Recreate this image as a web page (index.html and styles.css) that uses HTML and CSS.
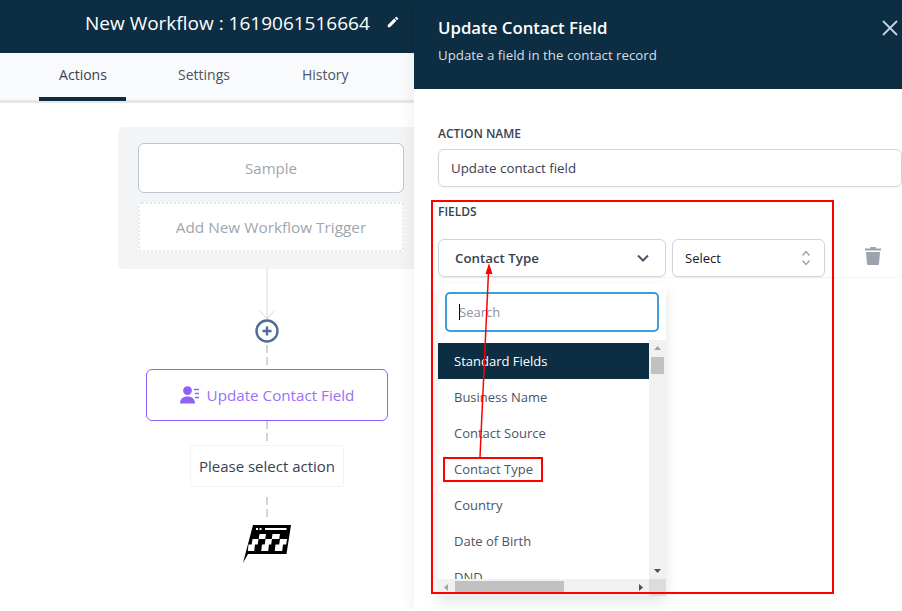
FILE: index.html
```html
<!DOCTYPE html>
<html lang="en">
<head>
<meta charset="utf-8">
<title>Update Contact Field</title>
<link rel="stylesheet" href="styles.css">
</head>
<body>
<div class="app">
  <main class="builder">
    <header class="top">
      <span class="top-title">New Workflow : 1619061516664</span>
      <svg class="pencil" viewBox="0 0 24 24" width="14" height="14"><path fill="#fff" d="M3 17.25V21h3.75L17.81 9.94l-3.75-3.75L3 17.25zM20.71 7.04a1 1 0 0 0 0-1.41l-2.34-2.34a1 1 0 0 0-1.41 0l-1.83 1.83 3.75 3.75 1.83-1.83z"/></svg>
    </header>
    <nav class="tabs">
      <a class="tab tab-active">Actions</a>
      <a class="tab tab-settings">Settings</a>
      <a class="tab tab-history">History</a>
    </nav>
    <section class="canvas">
      <div class="trigger-card">
        <div class="trigger">Sample</div>
        <div class="trigger trigger-add">Add New Workflow Trigger</div>
      </div>
      <div class="flow">
        <svg class="arrow-in" width="20" height="51" viewBox="0 0 20 51"><path d="M10 0V50M3 42l7 8 7-8" fill="none" stroke="#d5d8de" stroke-width="1"/></svg>
        <svg class="plus" width="24" height="24" viewBox="0 0 24 24"><circle cx="12" cy="12" r="10.500" fill="#fff" stroke="#4d6d92" stroke-width="2.400"/><path d="M12 7.500v9M7.500 12h9" stroke="#4d6d92" stroke-width="2.400"/></svg>
        <div class="dash dash-a"></div>
        <div class="action">
          <svg width="20" height="18" viewBox="0 0 20 18"><circle cx="7.500" cy="4.600" r="4.400" fill="#9061f9"/><path d="M0 17.500c0-4.500 3-7 7.500-7s7.500 2.500 7.500 7z" fill="#9061f9"/><path d="M14 3.500h5M15 7.500h4M15 11.500h4" stroke="#9061f9" stroke-width="1.600"/></svg>
          <span>Update Contact Field</span>
        </div>
        <div class="dash dash-b"></div>
        <div class="select-action">Please select action</div>
        <div class="dash dash-c"></div>
        <svg class="finish" width="48" height="38" viewBox="0 0 48 38">
          <path d="M10 0H48L43.500 29H5L0 38Z" fill="#000"/>
          <path d="M13 3h2v2h-2zM16.500 3h2v2h-2zM22 3h21.500v2H22z" fill="#fff"/>
          <path d="M16.500 9h6.500l-.8 5h-6.500zM29.500 9h7.500l-.8 5h-7.500zM9.500 14h6l-.8 5.500h-6zM22.500 14h6.500l-.8 5.500h-6.500zM37 14h7l-.8 5.500h-7zM5.500 19.500h6.500l-.8 6.500H4.800zM19 19.500h7l-.8 6.500h-7zM32.500 19.500h7.500l-.8 6.500h-7.500z" fill="#fff"/>
        </svg>
      </div>
    </section>
  </main>

  <aside class="panel">
    <header class="panel-head">
      <div>
        <h1 class="panel-title">Update Contact Field</h1>
        <p class="panel-sub">Update a field in the contact record</p>
      </div>
      <svg class="close" width="16" height="16" viewBox="0 0 16 16"><path d="M1 1l14 14M15 1L1 15" stroke="#c6d3e6" stroke-width="1.800"/></svg>
    </header>
    <div class="panel-body">
      <label class="label">ACTION NAME</label>
      <div class="input">Update contact field</div>
      <label class="label label-fields">FIELDS</label>
      <div class="field-row">
        <div class="select select-type">
          <span>Contact Type</span>
          <svg width="12" height="8" viewBox="0 0 12 8"><path d="M1 1.500l5 5 5-5" fill="none" stroke="#4b5563" stroke-width="2"/></svg>
        </div>
        <div class="select select-value">
          <span>Select</span>
          <svg width="10" height="16" viewBox="0 0 10 16"><path d="M1.500 5.500L5 1.500l3.500 4M1.500 10.500L5 14.500l3.500-4" fill="none" stroke="#9ca3af" stroke-width="1.400"/></svg>
        </div>
        <svg class="trash" width="16" height="18" viewBox="0 0 16 18"><path fill="#9ca3af" d="M5.500 0h5l.7 1.500H16v2H0v-2h4.800zM1 5h14l-1 12a1 1 0 0 1-1 1H3a1 1 0 0 1-1-1z"/></svg>
      </div>
      <div class="dropdown">
        <div class="search"><span class="caret"></span><span class="search-text">Search</span></div>
        <div class="list-wrap">
          <ul class="list">
            <li class="list-group">Standard Fields</li>
            <li>Business Name</li>
            <li>Contact Source</li>
            <li>Contact Type</li>
            <li>Country</li>
            <li>Date of Birth</li>
            <li>DND</li>
          </ul>
          <div class="vbar">
            <svg width="17" height="17" viewBox="0 0 17 17"><path d="M5 10l3.500-4 3.500 4z" fill="#a3a3a3"/></svg>
            <div class="vthumb"></div>
            <svg class="vdown" width="17" height="17" viewBox="0 0 17 17"><path d="M5 7l3.500 4 3.500-4z" fill="#505050"/></svg>
          </div>
          <div class="hbar">
            <svg width="17" height="17" viewBox="0 0 17 17"><path d="M10 5l-4 3.500 4 3.500z" fill="#a3a3a3"/></svg>
            <div class="hthumb"></div>
            <svg class="hright" width="17" height="17" viewBox="0 0 17 17"><path d="M7 5l4 3.500-4 3.500z" fill="#505050"/></svg>
          </div>
          <div class="corner"></div>
        </div>
      </div>
    </div>
  </aside>
</div>

<div class="mark mark-fields"></div>
<div class="mark mark-item"></div>
<svg class="mark-arrow" width="902" height="611" viewBox="0 0 902 611"><path d="M480 457L488.500 272" stroke="#f00" stroke-width="1.500" fill="none"/><path d="M489 263l-3.500 11h7z" fill="#f00"/></svg>
</body>
</html>
```
FILE: styles.css
```css
* { box-sizing: border-box; }
html, body { margin: 0; height: 100%; overflow: hidden; }
body { font-family: "Open Sans", "Noto Sans", sans-serif; background: #fff; color: #374151; }
.app { display: flex; width: 902px; height: 611px; overflow: hidden; }

.builder { width: 414px; flex: none; display: flex; flex-direction: column; overflow: hidden; }
.top { height: 53px; background: #0d2d42; color: #fff; display: flex; align-items: center; padding: 0 0 8px 85px; gap: 16px; flex: none; }
.top-title { font-size: 19px; white-space: nowrap; }
.pencil { margin-top: -2px; }

.tabs { height: 50px; background: #f8fafc; border-bottom: 3px solid #e5e7eb; display: flex; flex: none; padding-left: 39px; }
.tab { height: 48px; font-size: 14px; font-weight: 500; color: #4b5563; display: flex; align-items: center; justify-content: center; padding-bottom: 5px; }
.tab-active { width: 87px; border-bottom: 4px solid #0d2d42; color: #374151; padding-bottom: 1px; padding-left: 1px; }
.tab-settings { margin-left: 52px; }
.tab-history { margin-left: 72px; }

.canvas { flex: 1; position: relative; padding: 24px 0 0 118px; }
.trigger-card { width: 306px; height: 142px; background: #f3f4f6; border-radius: 6px; padding: 16px 20px; display: flex; flex-direction: column; gap: 9px; }
.trigger { height: 50px; flex: none; background: #fff; border: 1px solid #bfc5ce; border-radius: 6px; font-size: 15px; color: #a0a6b1; display: flex; align-items: center; justify-content: center; }
.trigger-add { border: 2px dotted #e5e7eb; border-radius: 4px; font-size: 15.350px; }

.flow { width: 298px; display: flex; flex-direction: column; align-items: center; }
.arrow-in { flex: none; }
.plus { margin-top: -1px; flex: none; }
.dash { width: 2px; flex: none; background: repeating-linear-gradient(to bottom, #d1d5db 0 8px, transparent 8px 12px); }
.dash-a { height: 24px; margin-top: 2px; }
.dash-b { height: 24px; }
.dash-c { height: 24px; margin-top: 10px; }
.action { width: 242px; height: 52px; flex: none; border: 1px solid #9061f9; border-radius: 6px; color: #9b71f5; font-size: 15.200px; display: flex; align-items: center; justify-content: center; gap: 7px; }
.select-action { height: 42px; width: 154px; flex: none; border: 1px dotted #e5e7eb; border-radius: 2px; font-size: 15px; color: #374151; display: flex; align-items: center; justify-content: center; }
.finish { flex: none; margin: 4px 0 0 0; }

.panel { flex: 1; box-shadow: -6px 0 12px rgba(0,0,0,.04); position: relative; display: flex; flex-direction: column; }
.panel-head { height: 89px; background: #0d2d42; color: #fff; padding: 16px 0 0 24px; display: flex; justify-content: space-between; flex: none; }
.panel-title { margin: 0; font-size: 16.800px; font-weight: 600; line-height: 24px; }
.panel-sub { margin: 5px 0 0; font-size: 13.300px; line-height: 20px; color: #d6dde6; }
.close { margin: 4px 4px 0 0; }

.panel-body { padding: 37px 0 0 24px; flex: 1; min-height: 0; }
.label { display: block; font-size: 12px; font-weight: 600; color: #374151; line-height: 16px; }
.input { height: 38px; margin-top: 7px; border: 1px solid #d1d5db; border-radius: 6px; font-size: 13.300px; color: #374151; padding-left: 12px; display: flex; align-items: center; box-shadow: 0 1px 2px rgba(0,0,0,.05); }
.label-fields { margin-top: 17px; }
.field-row { display: flex; margin-top: 19px; height: 39px; border-bottom: 1px solid #f3f4f6; border-radius: 0 0 6px 0; }
.select { height: 38px; border: 1px solid #d1d5db; border-radius: 6px; font-size: 13px; display: flex; align-items: center; justify-content: space-between; box-shadow: 0 1px 2px rgba(0,0,0,.05); background: #fff; }
.select-type { width: 228px; padding: 0 16px; font-weight: 600; font-size: 13.300px; color: #374151; }
.select-value { width: 153px; margin-left: 6px; padding: 0 13px 0 12px; color: #111827; }
.trash { margin: 8px 0 0 40px; }

.dropdown { width: 228px; height: 312px; margin-top: 6px; background: #fff; box-shadow: 0 6px 14px rgba(0,0,0,.1); display: flex; flex-direction: column; }
.search { height: 40px; margin: 8px 7px 0 7px; flex: none; border: 2px solid #3b9edb; border-radius: 5px; display: flex; align-items: center; padding-left: 12px; font-size: 13px; color: #8b93a1; }
.caret { width: 1px; height: 16px; background: #000; }
.search-text { margin-left: -1px; }
.list-wrap { margin-top: 8px; flex: 1; min-height: 0; display: grid; grid-template-columns: 211px 17px; grid-template-rows: 1fr 17px; }
.list { list-style: none; margin: 0; padding: 3px 0 0; overflow: hidden; font-size: 13px; color: #4b5563; }
.list li { height: 36px; padding-left: 16px; display: flex; align-items: center; }
.list .list-group { background: #0d2d42; color: #fff; font-weight: 500; }
.vbar { background: #f1f1f1; display: flex; flex-direction: column; }
.vthumb { width: 13px; height: 17px; margin: 0 2px 0 2px; background: #c1c1c1; flex: none; }
.vdown { margin-top: auto; }
.vbar svg, .hbar svg { flex: none; }
.hbar { background: #f1f1f1; display: flex; }
.hthumb { width: 109px; height: 13px; margin-top: 2px; background: #c1c1c1; flex: none; }
.hright { margin-left: auto; }
.corner { background: #dcdcdc; }

.mark { position: absolute; border: 2px solid #f00; pointer-events: none; }
.mark-fields { left: 431px; top: 200px; width: 403px; height: 394px; }
.mark-item { left: 443px; top: 457px; width: 100px; height: 25px; }
.mark-arrow { position: absolute; left: 0; top: 0; pointer-events: none; }
```
